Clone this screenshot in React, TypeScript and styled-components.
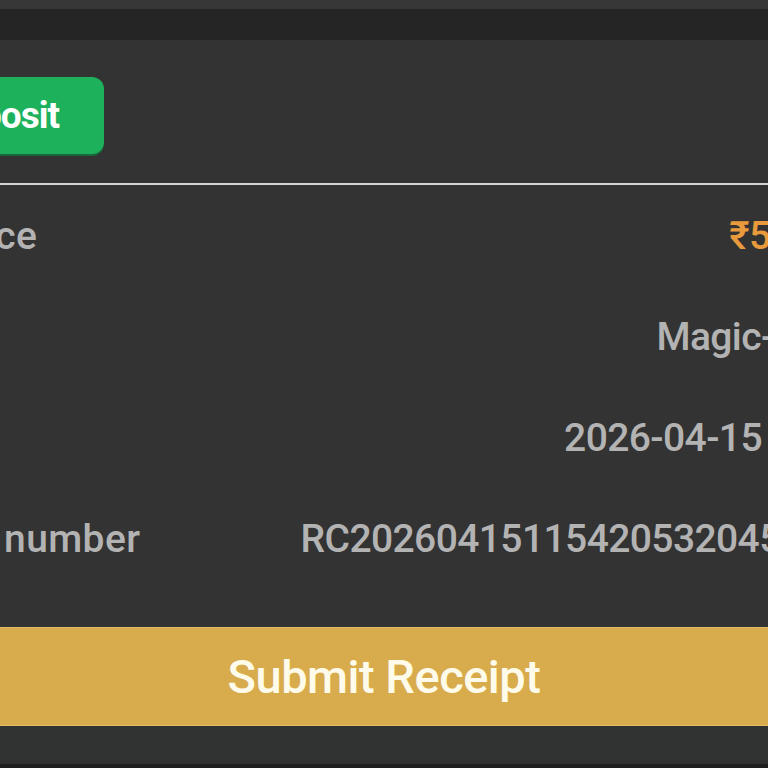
import React from 'react';
import styled, { createGlobalStyle } from 'styled-components';

const GlobalStyle = createGlobalStyle`
  html, body {
    margin: 0;
    padding: 0;
    background: #333333;
    overflow: hidden;
  }
  body {
    font-family: Roboto, "Noto Sans", "DejaVu Sans", sans-serif;
  }
`;

const Screen = styled.div`
  width: 768px;
  height: 768px;
  display: flex;
  flex-direction: column;
  background: #333333;
  overflow: hidden;
`;

const StatusStrip = styled.div`
  height: 9px;
  background: #373737;
  flex-shrink: 0;
`;

const TitleBar = styled.div`
  height: 31px;
  background: #252525;
  flex-shrink: 0;
`;

// the visible window is a crop of a wider page
const Sheet = styled.div`
  width: 973px;
  margin-left: -105px;
  flex-shrink: 0;
`;

const ActionRow = styled.div`
  display: flex;
  padding-top: 37px;
`;

const DepositButton = styled.button`
  height: 77px;
  padding: 0 45px 0 44px;
  border: none;
  border-radius: 12px;
  background: #1db15c;
  box-shadow: 0 2px 0 #17683b;
  color: #ffffff;
  font-family: Roboto, sans-serif;
  font-size: 37px;
  font-weight: 700;
  letter-spacing: -1px;
`;

const Divider = styled.hr`
  margin: 29px 0 0;
  border: none;
  height: 2px;
  background: #d2d2d2;
`;

const InfoList = styled.div`
  display: flex;
  flex-direction: column;
`;

const InfoRow = styled.div`
  height: 101px;
  display: flex;
  align-items: center;
  justify-content: space-between;
  padding-right: 1px;
`;

const Label = styled.span`
  font-size: 39px;
  line-height: 40px;
  font-weight: 500;
  letter-spacing: 0.4px;
  color: #b3b3b3;
  white-space: nowrap;
`;

const Value = styled(Label)<{ $accent?: boolean }>`
  letter-spacing: -0.6px;
  color: ${(p) => (p.$accent ? '#e89a3c' : '#b3b3b3')};
`;

const SubmitButton = styled.button`
  margin-top: 38px;
  height: 99px;
  width: 768px;
  flex-shrink: 0;
  border: none;
  border-top: 1px solid #e3bd66;
  border-bottom: 1px solid #e3bd66;
  background: #d8ac4c;
  color: #fffbea;
  font-family: Roboto, sans-serif;
  font-size: 47px;
  font-weight: 500;
  letter-spacing: -0.5px;
`;

const Footer = styled.div`
  height: 38px;
  background: #313333;
  flex-shrink: 0;
`;

const FooterEdge = styled.div`
  flex: 1;
  background: #1f1f1f;
`;

const rows = [
  { label: 'Balance', value: '₹500.00', accent: true },
  { label: 'Type', value: 'Magic-Pay 2' },
  { label: 'Time', value: '2026-04-15 11:54' },
  { label: 'Order number', value: 'RC202604151154205320459912' },
];

export default function App() {
  return (
    <>
      <GlobalStyle />
      <Screen>
        <StatusStrip />
        <TitleBar />
        <Sheet>
          <ActionRow>
            <DepositButton>Deposit</DepositButton>
          </ActionRow>
          <Divider />
          <InfoList>
            {rows.map((r) => (
              <InfoRow key={r.label}>
                <Label>{r.label}</Label>
                <Value $accent={r.accent}>{r.value}</Value>
              </InfoRow>
            ))}
          </InfoList>
        </Sheet>
        <SubmitButton>Submit Receipt</SubmitButton>
        <Footer />
        <FooterEdge />
      </Screen>
    </>
  );
}
